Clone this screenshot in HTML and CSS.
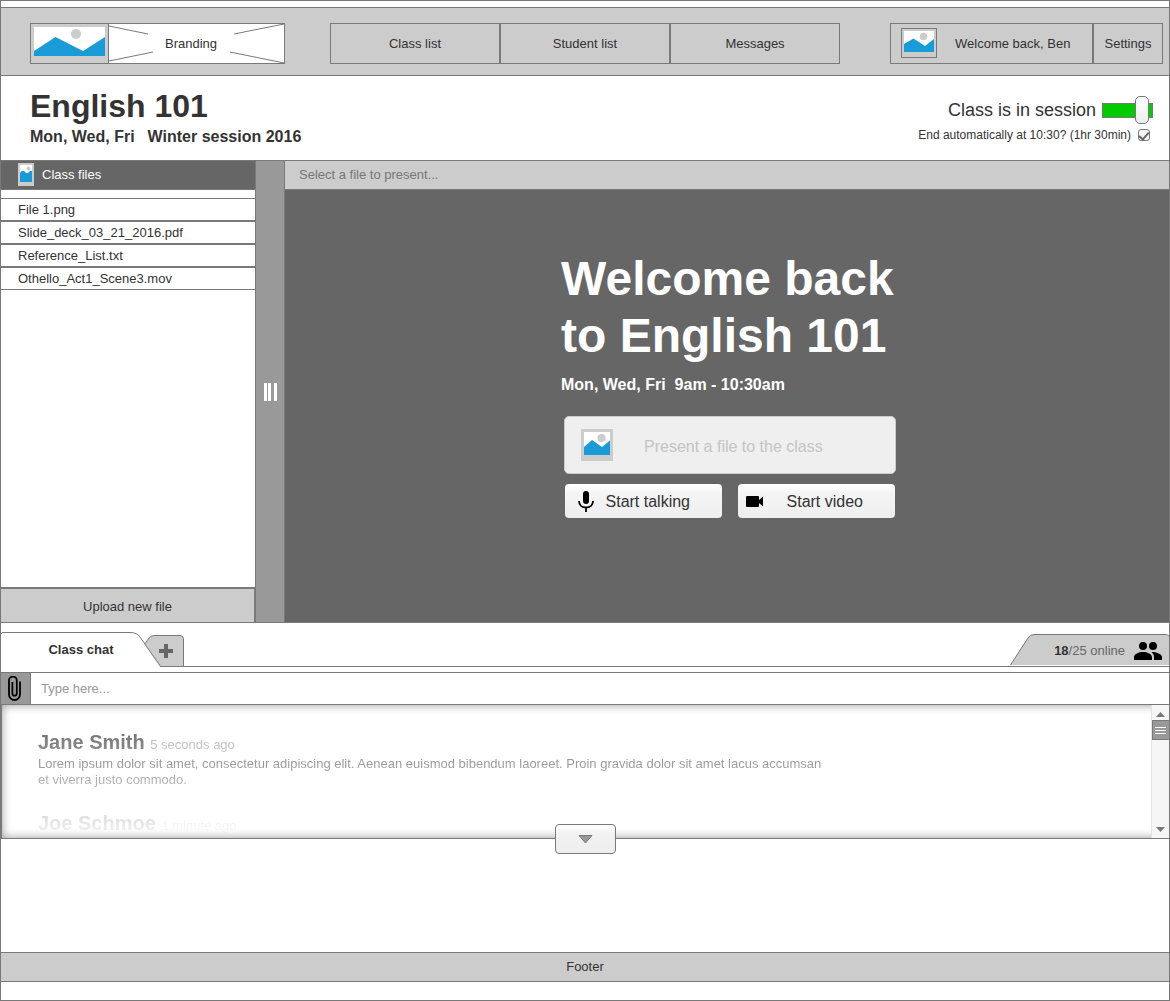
FILE: index.html
```html
<!DOCTYPE html>
<html lang="en">
<head>
<meta charset="utf-8">
<meta name="viewport" content="width=device-width, initial-scale=1">
<title>English 101</title>
<link rel="stylesheet" href="styles.css">
</head>
<body>
<div class="page">
  <header class="topbar">
    <a class="brand" href="#">
      <svg class="brand-picture" viewBox="0 0 77 39" aria-hidden="true">
        <path fill="#fff" d="M3 3h71v29H3z"/>
        <path fill="#199bd7" d="M3 27 24.500 13 52 27 74 13v19H3z"/>
        <circle cx="45" cy="10" r="5" fill="#ccc"/>
      </svg>
      <span class="brand-name">
        <svg class="brand-lines" viewBox="0 0 175 39" preserveAspectRatio="none" aria-hidden="true">
          <path d="M0 2 39 10M0 37 44 28M175 0 125 10M175 39 121 28" fill="none" stroke="#797979"/>
        </svg>
        <span class="brand-text">Branding</span>
      </span>
    </a>
    <nav class="menu">
      <a href="#">Class list</a>
      <a href="#">Student list</a>
      <a href="#">Messages</a>
    </nav>
    <div class="account">
      <a class="profile" href="#">
        <svg class="avatar" viewBox="0 0 34 28" aria-hidden="true">
          <path fill="#fff" d="M2 2h30v21H2z"/>
          <path fill="#199bd7" d="M2 15 11.500 9.500 23 17 32 10v13H2z"/>
          <circle cx="21.500" cy="7.500" r="3.800" fill="#ccc"/>
        </svg>
        <span>Welcome back, Ben</span>
      </a>
      <a class="settings" href="#">Settings</a>
    </div>
  </header>

  <section class="course">
    <div>
      <h1>English 101</h1>
      <p class="schedule"><span>Mon, Wed, Fri</span><span>Winter session 2016</span></p>
    </div>
    <div class="session">
      <div class="session-row">
        <label for="session">Class is in session</label>
        <input class="switch" id="session" type="range" min="0" max="100" value="92">
      </div>
      <div class="auto-row">
        <label for="auto-end">End automatically at 10:30? (1hr 30min)</label>
        <input class="tick" id="auto-end" type="checkbox" checked>
      </div>
    </div>
  </section>

  <main class="workspace">
    <aside class="files">
      <h2>
        <svg width="16" height="23" viewBox="0 0 16 23" aria-hidden="true">
          <path fill="#ccc" d="M0 0h16v23H0z"/>
          <path fill="#fff" d="M2 2h12v17H2z"/>
          <path fill="#199bd7" d="M2 10 3.500 8 6 8 8 10 10 10 12 8h2v11H2z"/>
          <circle cx="10.500" cy="5.500" r="2" fill="#ccc"/>
        </svg>
        <span>Class files</span>
      </h2>
      <ul>
        <li><a href="#">File 1.png</a></li>
        <li><a href="#">Slide_deck_03_21_2016.pdf</a></li>
        <li><a href="#">Reference_List.txt</a></li>
        <li><a href="#">Othello_Act1_Scene3.mov</a></li>
      </ul>
      <button class="upload" type="button">Upload new file</button>
    </aside>
    <div class="divider">
      <svg width="13" height="18" viewBox="0 0 13 18" aria-hidden="true"><path fill="#fff" d="M0 0h3v18H0zM4 0h3v18H4zM10 0h3v18h-3z"/></svg>
    </div>
    <section class="presenter">
      <p class="presenter-bar">Select a file to present...</p>
      <div class="stage">
        <div class="welcome">
          <h2>Welcome back<br>to English 101</h2>
          <p class="hours"><span>Mon, Wed, Fri</span><span>9am - 10:30am</span></p>
          <div class="actions">
            <button class="present" type="button" disabled>
              <svg width="32" height="32" viewBox="0 0 32 32" aria-hidden="true">
                <path fill="#ccc" d="M0 0h32v32H0z"/>
                <path fill="#fff" d="M3 3h26v23H3z"/>
                <path fill="#199bd7" d="M3 18 11 11 21 18 29 11.500V26H3z"/>
                <circle cx="20.500" cy="9" r="4" fill="#ccc"/>
              </svg>
              <span>Present a file to the class</span>
            </button>
            <div class="media">
              <button type="button">
                <svg width="16" height="21" viewBox="0 0 16 21" aria-hidden="true">
                  <rect x="5" y="0" width="6" height="13" rx="3"/>
                  <path d="M1 10c0 4 3 6.500 7 6.500s7-2.500 7-6.500M8 16v5" fill="none" stroke="#000" stroke-width="1.800"/>
                </svg>
                <span>Start talking</span>
              </button>
              <button type="button">
                <svg width="17" height="11" viewBox="0 0 17 11" aria-hidden="true">
                  <path d="M1 0h11q1 0 1 1v3l4-3.500v10L13 7v3q0 1-1 1H1q-1 0-1-1V1q0-1 1-1z"/>
                </svg>
                <span>Start video</span>
              </button>
            </div>
          </div>
        </div>
      </div>
    </section>
  </main>

  <section class="chat">
    <div class="tabs">
      <button class="tab tab-current" type="button">
        <svg class="tab-shape" width="160" height="35" viewBox="0 0 160 35" aria-hidden="true">
          <path d="M0 35V2.500Q0 .5 2 .5H129Q136 .5 139 5L159.500 35z" fill="#fff"/>
          <path d="M0 2Q.5 .5 3 .5H129Q136 .5 139 5L159.500 34.500" fill="none" stroke="#797979"/>
        </svg>
        <span>Class chat</span>
      </button>
      <button class="tab tab-add" type="button" aria-label="Add a tab">
        <svg width="40" height="32" viewBox="0 0 40 32" aria-hidden="true">
          <path d="M.5 9.500 5 3Q7 .5 10 .5H36Q39.500 .5 39.500 4V31.500H15.500z" fill="#ccc" stroke="#797979"/>
          <path d="M20 9h4v5h5v4h-5v5h-4v-5h-5v-4h5z" fill="#666"/>
        </svg>
      </button>
      <div class="online">
        <svg class="online-shape" width="159" height="31" viewBox="0 0 159 31" aria-hidden="true">
          <path d="M.5 31 18 4Q20 .5 24 .5H155Q158 .5 159 2V31z" fill="#ccc"/>
          <path d="M.5 31 18 4Q20 .5 24 .5H155Q158 .5 159 2" fill="none" stroke="#797979"/>
        </svg>
        <span class="online-count"><b>18</b>/25 online</span>
        <svg class="people" width="28" height="18" viewBox="0 0 28 18" aria-hidden="true">
          <circle cx="9" cy="4" r="4"/>
          <circle cx="19" cy="4" r="4"/>
          <path d="M0 18v-3c0-3 5-5 9-5s9 2 9 5v3zM18 10c4 0 10 2 10 5v3h-8v-3c0-2-1-3.500-2.500-5z"/>
        </svg>
      </div>
    </div>
    <form class="composer">
      <button type="button" aria-label="Attach a file">
        <svg width="13" height="25" viewBox="0 0 13 25" aria-hidden="true">
          <path d="M12 5.500V18.500a5.500 5.500 0 0 1-11 0V4.500a3.800 3.800 0 0 1 7.800 0v13a2.200 2.200 0 0 1-4.400 0V6" fill="none" stroke="#000" stroke-width="1.800"/>
        </svg>
      </button>
      <input type="text" placeholder="Type here..." aria-label="Message">
    </form>
    <div class="log">
      <div class="messages">
        <article>
          <h3>Jane Smith <time>5 seconds ago</time></h3>
          <p>Lorem ipsum dolor sit amet, consectetur adipiscing elit. Aenean euismod bibendum laoreet. Proin gravida dolor sit amet lacus accumsan et viverra justo commodo.</p>
        </article>
        <article>
          <h3>Joe Schmoe <time>1 minute ago</time></h3>
        </article>
      </div>
      <div class="scroller" aria-hidden="true">
        <svg width="9" height="5" viewBox="0 0 9 5"><path fill="#797979" d="M0 5 4.500 0 9 5z"/></svg>
        <div class="scroller-thumb"></div>
        <svg class="scroller-down" width="9" height="5" viewBox="0 0 9 5"><path fill="#797979" d="M0 0h9L4.500 5z"/></svg>
      </div>
      <button class="expand" type="button" aria-label="Show more">
        <svg width="15" height="9" viewBox="0 0 15 9" aria-hidden="true"><path d="M1 .5h13L7.500 8z" fill="#999" stroke="#797979"/></svg>
      </button>
    </div>
  </section>

  <footer class="footer">Footer</footer>
</div>
</body>
</html>
```
FILE: styles.css
```css
* {
  box-sizing: border-box;
}

body,
h1,
h2,
h3,
p,
ul {
  margin: 0;
  padding: 0;
}

body {
  background: #fff;
  color: #333;
  font: 13px/16px "Liberation Sans", Arial, sans-serif;
}

button,
input {
  margin: 0;
  color: inherit;
  font: inherit;
}

button {
  padding: 0;
  border: 0;
  border-radius: 0;
}

a {
  color: inherit;
  text-decoration: none;
}

svg {
  display: block;
  flex: none;
}

.page {
  display: flex;
  flex-direction: column;
  min-height: 100vh;
  padding: 6px 0 18px;
  border: 1px solid #797979;
}

/* Top bar */

.topbar {
  display: flex;
  padding: 15px 6px 11px 29px;
  border: solid #797979;
  border-width: 1px 0;
  background: #ccc;
}

.brand {
  display: flex;
  flex: none;
  width: 255px;
  height: 41px;
  margin-right: 45px;
  border: 1px solid #797979;
}

.brand-picture {
  width: 77px;
  height: 39px;
}

.brand-name {
  position: relative;
  display: flex;
  flex: 1;
  align-items: center;
  padding-left: 56px;
  border-left: 1px solid #797979;
  background: #fff;
}

.brand-lines {
  position: absolute;
  inset: 0;
  width: 100%;
  height: 100%;
}

.menu {
  display: flex;
  flex: 1;
  margin-right: 50px;
}

.menu a {
  display: flex;
  flex: 1;
  align-items: center;
  justify-content: center;
  border: 1px solid #797979;
}

.account {
  display: flex;
  flex: none;
  height: 41px;
}

.profile,
.settings {
  display: flex;
  align-items: center;
  border: 1px solid #797979;
}

.profile {
  gap: 18px;
  width: 203px;
  padding-left: 10px;
}

.avatar {
  width: 36px;
  height: 30px;
  margin-bottom: 2px;
  border: 1px solid #797979;
}

.settings {
  justify-content: center;
  width: 70px;
}

/* Course heading */

.course {
  display: flex;
  justify-content: space-between;
  padding: 11px 16px 11px 29px;
  border-bottom: 1px solid #797979;
}

.course h1 {
  font-size: 32px;
  line-height: 38px;
}

.schedule {
  display: flex;
  gap: 13px;
  font-size: 16px;
  font-weight: bold;
  line-height: 24px;
}

.session {
  padding-top: 9px;
}

.session-row,
.auto-row {
  display: flex;
  align-items: center;
  justify-content: flex-end;
}

.session-row {
  gap: 6px;
  height: 28px;
  font-size: 18px;
}

.auto-row {
  gap: 7px;
  margin-top: 3px;
  padding-right: 3px;
  font-size: 12px;
}

.switch {
  width: 51px;
  height: 28px;
  appearance: none;
  background: none;
}

.switch::-webkit-slider-runnable-track {
  height: 15px;
  border: 1px solid #797979;
  background: #0c0;
}

.switch::-webkit-slider-thumb {
  width: 14px;
  height: 28px;
  margin-top: -8px;
  border: 1px solid #797979;
  border-radius: 5px;
  appearance: none;
  background: linear-gradient(#fff, #eee);
}

.tick {
  width: 12px;
  height: 12px;
  border: 1px solid #797979;
  border-radius: 3px;
  appearance: none;
  background: #f4f4f4;
}

.tick:checked::before {
  display: block;
  width: 4px;
  height: 8px;
  margin: 0 auto;
  border: solid #666;
  border-width: 0 2px 2px 0;
  content: "";
  transform: rotate(42deg);
}

/* Workspace */

.workspace {
  display: flex;
  min-height: 462px;
  border-bottom: 1px solid #797979;
}

.files {
  display: flex;
  flex: none;
  flex-direction: column;
  width: 255px;
  border-right: 1px solid #797979;
}

.files h2 {
  display: flex;
  gap: 8px;
  align-items: center;
  height: 29px;
  padding-left: 17px;
  border-bottom: 1px solid #797979;
  background: #666;
  color: #fff;
  font-size: 13px;
  font-weight: normal;
}

.files h2 svg {
  margin-bottom: 2px;
}

.files ul {
  flex: 1;
  margin-top: 8px;
  list-style: none;
}

.files li {
  height: 23px;
  padding-left: 17px;
  border: solid #797979;
  border-width: 1px 0;
  line-height: 21px;
}

.upload {
  height: 35px;
  padding-top: 2px;
  border: solid #797979;
  border-width: 2px 1px 0 0;
  background: #ccc;
}

.divider {
  display: flex;
  flex: none;
  align-items: center;
  justify-content: center;
  width: 29px;
  border-right: 1px solid #797979;
  background: #999;
}

.presenter {
  display: flex;
  flex: 1;
  flex-direction: column;
}

.presenter-bar {
  height: 29px;
  padding-left: 14px;
  border-bottom: 1px solid #797979;
  background: #ccc;
  color: #777;
  line-height: 27px;
}

.stage {
  flex: 1;
  padding: 60px 0;
  background: #666;
}

.welcome {
  width: 338px;
  margin: 0 auto;
  color: #fff;
}

.welcome h2 {
  padding-left: 3px;
  font-size: 48px;
  line-height: 57px;
  white-space: nowrap;
}

.hours {
  display: flex;
  gap: 9px;
  margin-top: 9px;
  padding-left: 3px;
  font-size: 16px;
  font-weight: bold;
  line-height: 24px;
}

.actions {
  margin: 19px 0 0 6px;
  color: #333;
  font-size: 16px;
}

.present {
  display: flex;
  align-items: center;
  width: 100%;
  height: 58px;
  padding: 0 16px;
  border: 1px solid #ccc;
  border-radius: 5px;
  background: #efefef;
  color: #c4c4c4;
}

.present span {
  padding: 4px 0 0 31px;
}

.media {
  display: flex;
  gap: 16px;
  margin: 10px 1px 0;
}

.media button {
  display: flex;
  flex: 1;
  align-items: center;
  height: 34px;
  padding: 0 32px 0 8px;
  border-radius: 4px;
  background: linear-gradient(#fff, #f4f4f4 30%, #eee);
}

.media svg {
  width: 26px;
}

.media button:last-child svg {
  width: 17px;
}

.media span {
  flex: 1;
  padding-top: 2px;
  text-align: right;
}

/* Chat */

.chat {
  flex: 1;
  padding: 9px 0 32px;
}

.tabs {
  display: flex;
  align-items: flex-end;
  height: 35px;
  background: linear-gradient(#797979, #797979) bottom / 100% 1px no-repeat;
}

.tab {
  background: none;
}

.tab-current {
  position: relative;
  z-index: 1;
  width: 160px;
  height: 35px;
  font-weight: bold;
}

.tab-current span {
  position: relative;
}

.tab-shape,
.online-shape {
  position: absolute;
  top: 0;
  left: 0;
}

.tab-add {
  margin-left: -17px;
}

.online {
  position: relative;
  display: flex;
  gap: 9px;
  align-items: center;
  justify-content: flex-end;
  width: 159px;
  height: 31px;
  margin: 0 0 2px auto;
  padding: 2px 7px 0 0;
  color: #666;
}

.online-count,
.people {
  position: relative;
}

.online b {
  color: #333;
}

.composer {
  display: flex;
  height: 33px;
  margin-top: 5px;
  border: solid #797979;
  border-width: 1px 0;
}

.composer button {
  display: flex;
  align-items: center;
  justify-content: center;
  width: 30px;
  padding-right: 3px;
  border-right: 1px solid #797979;
  background: #999;
}

.composer input {
  flex: 1;
  padding: 0 10px;
  border: 0;
  background: none;
}

.composer input::placeholder {
  color: #999;
}

.log {
  position: relative;
  display: flex;
  height: 134px;
  border: solid #797979;
  border-width: 0 0 1px 1px;
  box-shadow: inset 0 0 10px #999;
}

.messages {
  flex: 1;
  overflow: hidden;
  padding: 25px 0 0 36px;
  -webkit-mask-image: linear-gradient(rgba(0, 0, 0, 0.85), rgba(0, 0, 0, 0.03));
  mask-image: linear-gradient(rgba(0, 0, 0, 0.85), rgba(0, 0, 0, 0.03));
}

.messages article {
  max-width: 790px;
  min-height: 81px;
}

.messages h3 {
  font-size: 20px;
  line-height: 24px;
}

.messages time {
  color: #999;
  font-size: 13px;
  font-weight: normal;
}

.messages p {
  margin-top: -1px;
}

.scroller {
  display: flex;
  flex-direction: column;
  align-items: center;
  width: 18px;
  padding: 7px 0 6px;
  border-left: 1px solid #e4e4e4;
  background: #f6f6f6;
}

.scroller-thumb {
  width: 18px;
  height: 20px;
  margin-top: 3px;
  border: 1px solid #797979;
  background: linear-gradient(#fff, #fff) 50% 6px / 11px 1px no-repeat, linear-gradient(#fff, #fff) 50% 9px / 11px 1px no-repeat, linear-gradient(#fff, #fff) 50% 12px / 11px 1px no-repeat, #999;
}

.scroller-down {
  margin-top: auto;
}

.expand {
  position: absolute;
  bottom: -16px;
  left: 50%;
  display: flex;
  align-items: center;
  justify-content: center;
  width: 61px;
  height: 30px;
  margin-left: -31px;
  border: 1px solid #797979;
  border-radius: 4px;
  background: linear-gradient(#fff, #f2f2f2 30%, #eee);
}

/* Footer */

.footer {
  border: solid #797979;
  border-width: 1px 0;
  background: #ccc;
  line-height: 28px;
  text-align: center;
}
```
